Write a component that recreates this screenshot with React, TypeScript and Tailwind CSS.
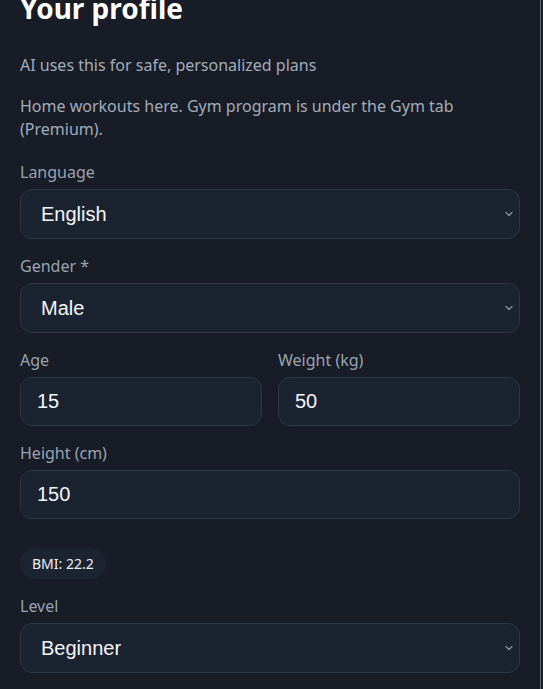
import React from "react";

const labelCls = "block text-[16px] leading-6 text-[#9aa3b0] mb-[5px]";
const fieldCls =
  "w-full rounded-xl border border-[#2e3745] bg-[#1b2230] text-[#f5f7fa] outline-none [color-scheme:dark]";
const valueFont = { fontFamily: '"Liberation Sans", Arial, sans-serif' };

function Label({ children }: { children: React.ReactNode }) {
  return <label className={labelCls}>{children}</label>;
}

function Select({ value, options }: { value: string; options: string[] }) {
  return (
    <div className="relative">
      <select
        defaultValue={value}
        className={`${fieldCls} h-[50px] appearance-none pl-5 pr-8 text-[20px]`}
        style={valueFont}
      >
        {options.map((o) => (
          <option key={o}>{o}</option>
        ))}
      </select>
      <svg
        className="pointer-events-none absolute right-[6px] top-1/2 -translate-y-1/2"
        width="10"
        height="10"
        viewBox="0 0 10 10"
        fill="none"
      >
        <path d="M2 3.5 L5 6.5 L8 3.5" stroke="#8a929f" strokeWidth="1.3" strokeLinecap="round" strokeLinejoin="round" />
      </svg>
    </div>
  );
}

function Input({ value }: { value: string }) {
  return (
    <input
      defaultValue={value}
      className={`${fieldCls} h-[49px] px-4 text-[20px]`}
      style={valueFont}
    />
  );
}

export default function App() {
  return (
    <div
      className="flex h-[689px] w-[543px] overflow-hidden bg-[#171c27]"
      style={{ fontFamily: '"Noto Sans", "Open Sans", sans-serif' }}
    >
      <div className="w-[540px] shrink-0 px-5">
        <h1 className="-mt-[10px] text-[28px] font-bold leading-[36px] text-white">
          Your profile
        </h1>

        <p className="mt-[27px] text-[16px] leading-6 text-[#a3acb9]">
          AI uses this for safe, personalized plans
        </p>
        <p className="mt-[18px] text-[16px] leading-[23px] text-[#a3acb9]">
          Home workouts here. Gym program is under the Gym tab (Premium).
        </p>

        <div className="mt-[19px]">
          <Label>Language</Label>
          <Select value="English" options={["English", "Español", "Русский"]} />
        </div>

        <div className="mt-[15px]">
          <Label>Gender *</Label>
          <Select value="Male" options={["Male", "Female"]} />
        </div>

        <div className="mt-[15px] grid grid-cols-2 gap-4">
          <div>
            <Label>Age</Label>
            <Input value="15" />
          </div>
          <div>
            <Label>Weight (kg)</Label>
            <Input value="50" />
          </div>
        </div>

        <div className="mt-[15px]">
          <Label>Height (cm)</Label>
          <Input value="150" />
        </div>

        <div className="mt-[29px] inline-flex h-[31px] items-center rounded-full bg-[#1c2331] px-3 text-[14px] text-[#eef1f5]">
          BMI: 22.2
        </div>

        <div className="mt-[15px]">
          <Label>Level</Label>
          <Select value="Beginner" options={["Beginner", "Intermediate", "Advanced"]} />
        </div>
      </div>
      <div className="w-px shrink-0 bg-[#5d6572]" />
    </div>
  );
}
